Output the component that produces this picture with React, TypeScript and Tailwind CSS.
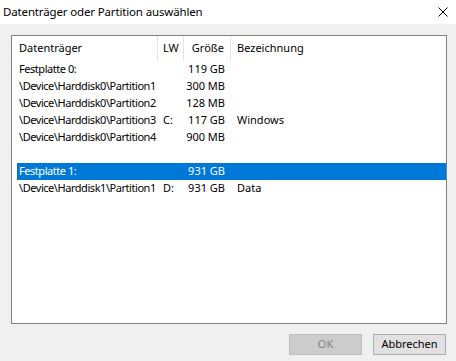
import React from 'react';

// Zeilen der Datenträgerliste
const rows = [
  { name: 'Festplatte 0:', lw: '', size: '119 GB', label: '' },
  { name: '\\Device\\Harddisk0\\Partition1', lw: '', size: '300 MB', label: '' },
  { name: '\\Device\\Harddisk0\\Partition2', lw: '', size: '128 MB', label: '' },
  { name: '\\Device\\Harddisk0\\Partition3', lw: 'C:', size: '117 GB', label: 'Windows' },
  { name: '\\Device\\Harddisk0\\Partition4', lw: '', size: '900 MB', label: '' },
  null,
  { name: 'Festplatte 1:', lw: '', size: '931 GB', label: '', selected: true },
  { name: '\\Device\\Harddisk1\\Partition1', lw: 'D:', size: '931 GB', label: 'Data' },
];

export default function App() {
  return (
    <div
      className="w-[456px] h-[361px] bg-[#f0f0f0] flex flex-col text-[11px] text-black overflow-hidden whitespace-nowrap"
      style={{ fontFamily: '"Noto Sans", "Open Sans", sans-serif' }}
    >
      {/* Titelleiste */}
      <div className="h-[24px] bg-white flex items-center justify-between pl-[3px] pr-[8px]">
        <span className="text-[11.5px] leading-none tracking-[-0.15px]">Datenträger oder Partition auswählen</span>
        <svg width="10" height="10" viewBox="0 0 10 10">
          <path d="M0.5 0.5 L9.5 9.5 M9.5 0.5 L0.5 9.5" stroke="#000" strokeWidth="1" />
        </svg>
      </div>

      {/* Liste */}
      <div className="px-[11px] pt-[11px]">
        <div className="h-[289px] w-[436px] bg-white border border-[#828282]">
          <div className="h-[25px] grid grid-cols-[146px_26px_47px_1fr] items-center">
            <div className="pl-[7px] border-r border-[#e5e5e5] h-full flex items-center">Datenträger</div>
            <div className="pl-[5px] border-r border-[#e5e5e5] h-full flex items-center">LW</div>
            <div className="pr-[6px] border-r border-[#e5e5e5] h-full flex items-center justify-end">Größe</div>
            <div className="pl-[6px] h-full flex items-center">Bezeichnung</div>
          </div>
          <div className="flex flex-col">
            {rows.map((r, i) =>
              r ? (
                <div
                  key={i}
                  className={`h-[17px] ml-[5px] grid grid-cols-[141px_26px_47px_1fr] items-center ${
                    r.selected ? 'bg-[#0078d7] text-white' : ''
                  }`}
                >
                  <div className="pl-[2px] tracking-[-0.45px]">{r.name}</div>
                  <div className="pl-[5px]">{r.lw}</div>
                  <div className="pr-[6px] text-right">{r.size}</div>
                  <div className="pl-[6px]">{r.label}</div>
                </div>
              ) : (
                <div key={i} className="h-[17px]" />
              )
            )}
          </div>
        </div>
      </div>

      {/* Schaltflächen */}
      <div className="flex justify-end gap-[11px] pr-[10px] pt-[10px]">
        <button className="w-[73px] h-[21px] bg-[#cccccc] border border-[#bfbfbf] text-[#838383]">OK</button>
        <button className="w-[73px] h-[21px] bg-[#e1e1e1] border border-[#adadad]">Abbrechen</button>
      </div>
    </div>
  );
}
